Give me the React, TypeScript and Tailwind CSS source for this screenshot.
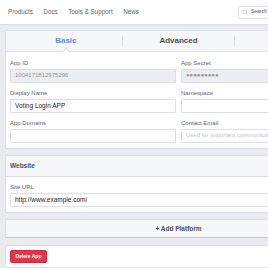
import { Search } from "lucide-react";

const navLinks: string[] = ["Products", "Docs", "Tools & Support", "News"];

function Field({
  label,
  value,
  placeholder,
  disabled,
}: {
  label: string;
  value?: string;
  placeholder?: string;
  disabled?: boolean;
}) {
  return (
    <div className="flex flex-col gap-[1.5px]">
      <span className="text-[6px] leading-[8px] text-[#606770]">{label}</span>
      <div
        className={
          disabled
            ? "h-[14.5px] rounded-[1px] border border-[#dddfe2] bg-[#ebedf0] px-[4px] flex items-center text-[6px] text-[#90949c]"
            : "h-[14.5px] rounded-[1px] border border-[#dddfe2] bg-white px-[4px] flex items-center text-[6.5px] text-[#1d2129]"
        }
      >
        {value ? (
          <span className="truncate">{value}</span>
        ) : (
          <span className="truncate text-[6px] text-[#bec3c9]">{placeholder}</span>
        )}
      </div>
    </div>
  );
}

export default function App() {
  return (
    <div className="w-[268px] h-[268px] overflow-hidden bg-[#e9ebee] font-['Liberation_Sans',Arial,sans-serif]">
      <nav className="h-[25px] w-[357px] bg-white border-b border-[#dddfe2] flex items-center pl-[8px]">
        <ul className="flex items-center gap-[10.5px] text-[6.3px] text-[#606770]">
          {navLinks.map((link) => (
            <li key={link}>{link}</li>
          ))}
        </ul>
        <div className="ml-[99px] h-[13px] w-[44px] shrink-0 rounded-[2px] border border-[#dddfe2] flex items-center gap-[3px] px-[3px] text-[5px] text-[#4b4f56]">
          <Search className="h-[6px] w-[6px] text-[#90949c]" strokeWidth={1.5} />
          <span>Search</span>
        </div>
      </nav>

      <div className="w-[347px] ml-[5px] mt-[5px] flex flex-col gap-[6px]">
        {/* app settings card */}
        <section className="bg-white border border-[#dddfe2] rounded-[2px]">
          <div className="h-[21px] bg-[#f6f7f9] border-b border-[#dddfe2] px-[4px] flex items-center">
            <div className="relative flex-1 h-full flex items-center justify-center text-[8px] font-bold text-[#5890ff]">
              Basic
              <span className="absolute bottom-[-3.5px] left-1/2 -ml-[3px] h-[6px] w-[6px] rotate-45 bg-white border-l border-t border-[#dddfe2]" />
            </div>
            <div className="h-[11px] w-px bg-[#dddfe2]" />
            <div className="flex-1 h-full flex items-center justify-center text-[8px] font-bold text-[#4b4f56]">
              Advanced
            </div>
            <div className="h-[11px] w-px bg-[#dddfe2]" />
            <div className="flex-1 h-full" />
          </div>
          <div className="grid grid-cols-2 gap-x-[5px] gap-y-[6px] px-[4px] pt-[7px] pb-[5px]">
            <Field label="App ID" value="1004171812975296" disabled />
            <Field label="App Secret" value="●●●●●●●●●" disabled />
            <Field label="Display Name" value="Voting Login APP" />
            <Field label="Namespace" />
            <Field label="App Domains" />
            <Field label="Contact Email" placeholder="Used for important communication about your app" />
          </div>
        </section>

        {/* website card */}
        <section className="bg-white border border-[#dddfe2] rounded-[2px]">
          <div className="h-[21px] bg-[#f6f7f9] border-b border-[#dddfe2] px-[4px] flex items-center text-[6.5px] font-bold text-[#4b4f56]">
            Website
          </div>
          <div className="px-[4px] pt-[6px] pb-[5px]">
            <Field label="Site URL" value="http://www.example.com/" />
          </div>
        </section>

        <button className="h-[19px] bg-[#f6f7f9] border border-[#dddfe2] border-b-[#c4c7cc] rounded-[2px] flex items-center justify-center text-[6.5px] font-bold text-[#4b4f56]">
          + Add Platform
        </button>

        <section className="mt-[1px] bg-white border border-[#dddfe2] rounded-[2px] px-[4px] pt-[4px] pb-[4px]">
          <button className="h-[13px] w-[37px] rounded-[2px] bg-[#e0354b] border border-[#cc2a3f] text-[5px] font-bold text-white flex items-center justify-center">
            Delete App
          </button>
        </section>
      </div>
    </div>
  );
}
